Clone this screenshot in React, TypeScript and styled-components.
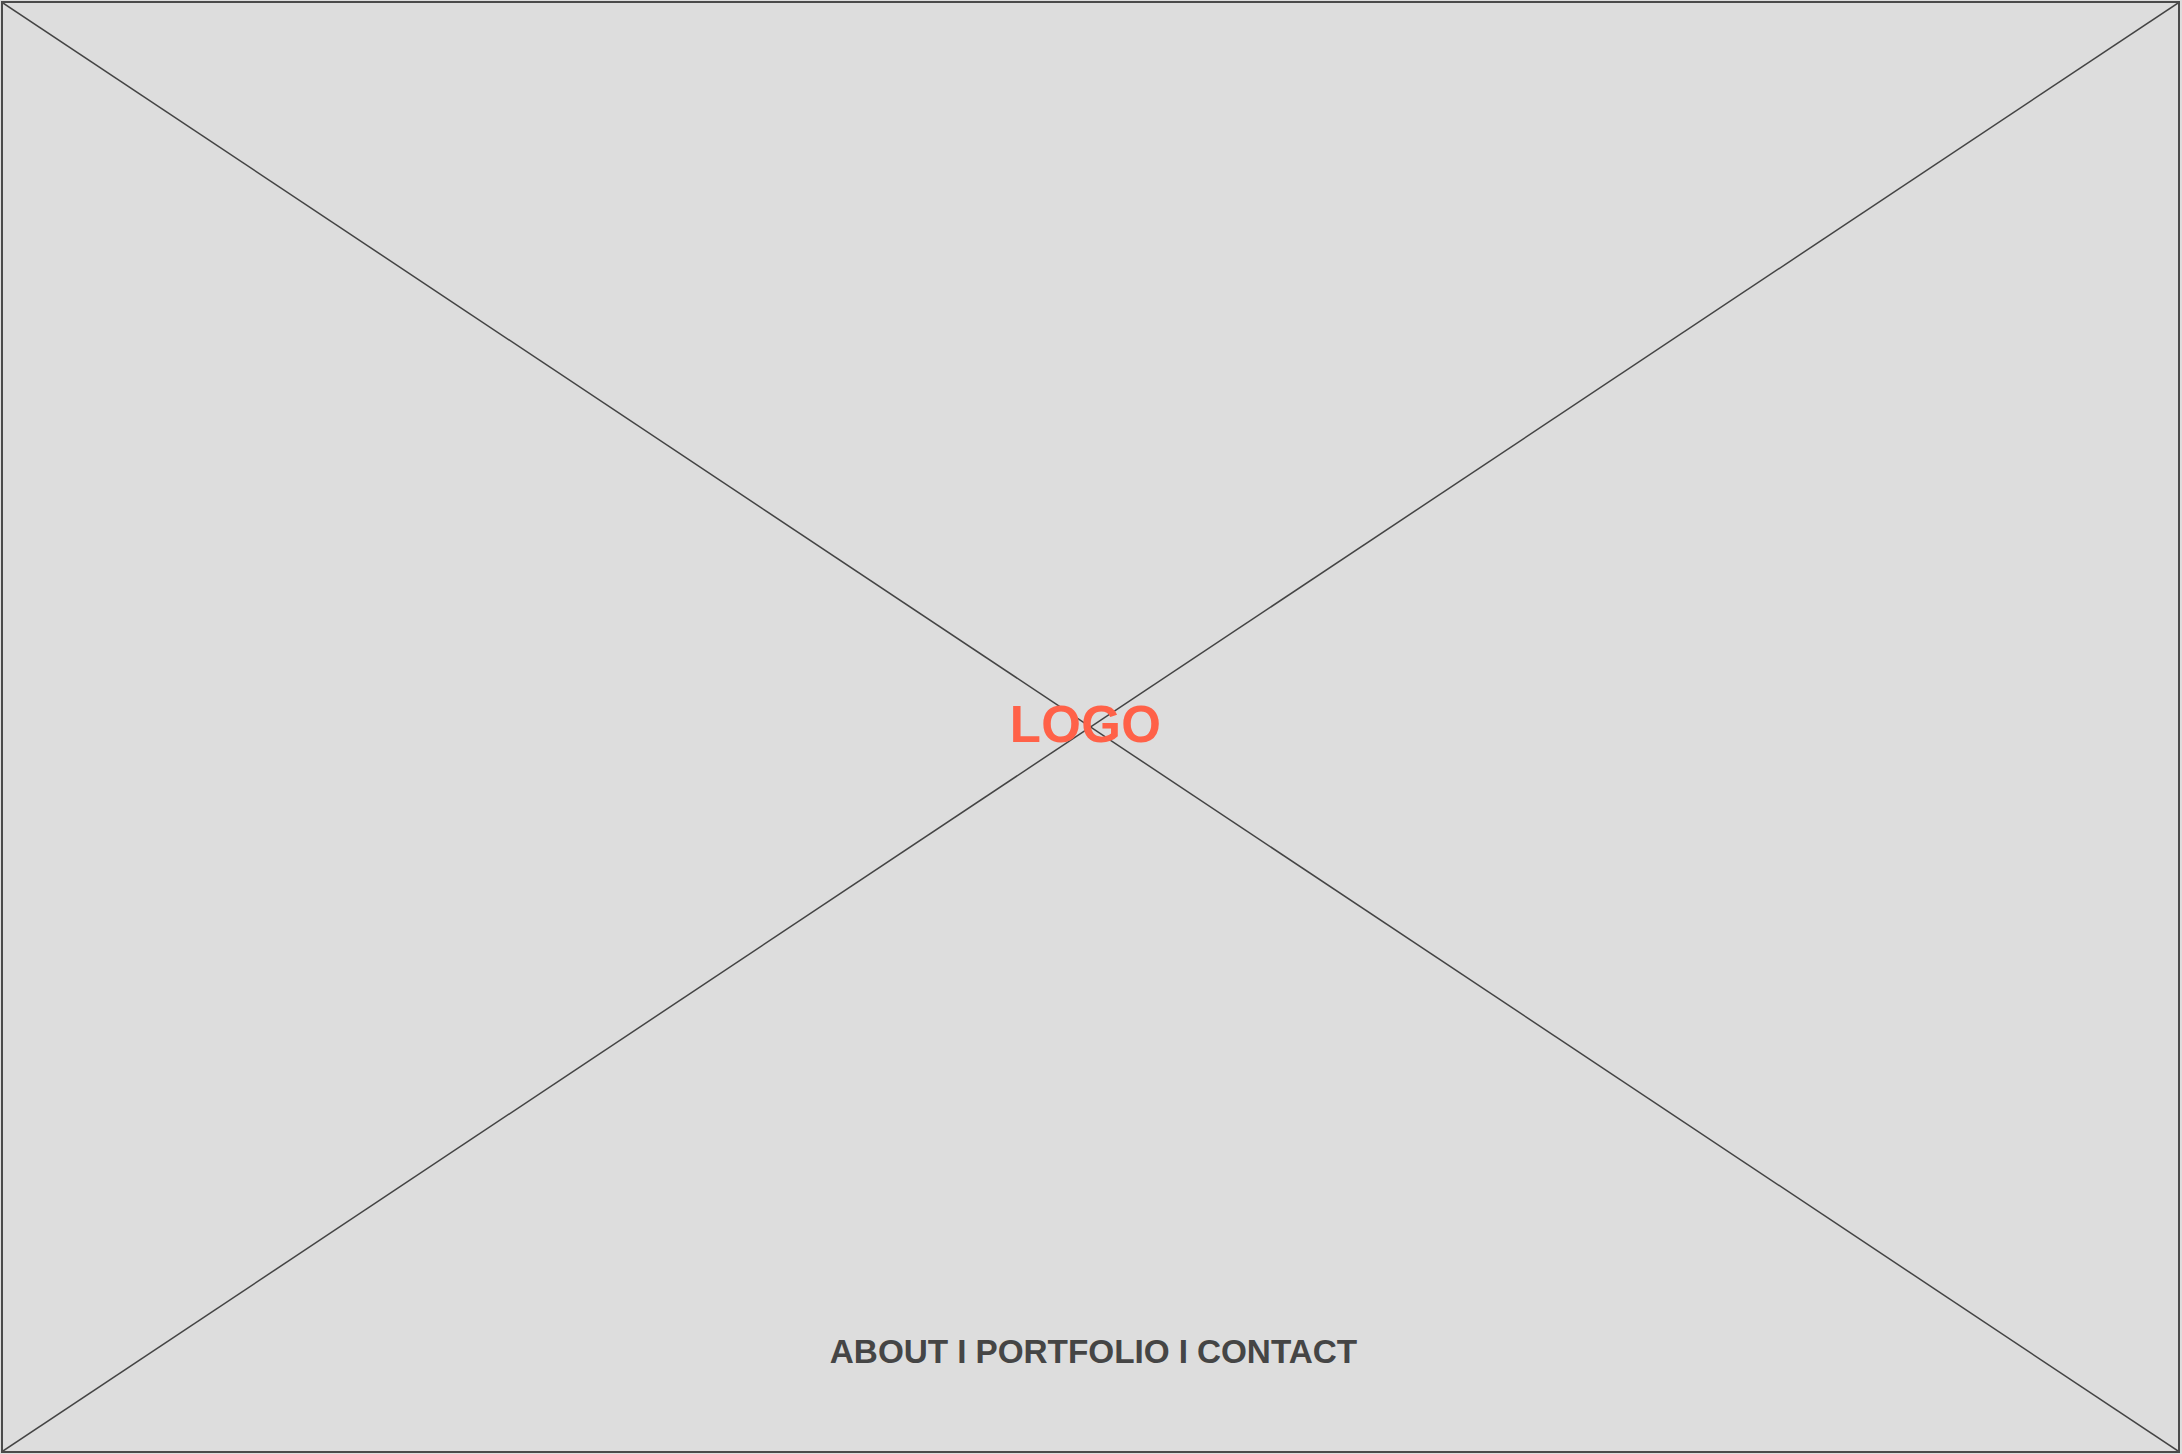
import React from "react";
import styled, { createGlobalStyle } from "styled-components";

const Global = createGlobalStyle`
  html, body {
    margin: 0;
    padding: 0;
    background: #dddddd;
  }
  body {
    font-family: "Liberation Sans", Arial, Helvetica, sans-serif;
  }
`;

const Frame = styled.div`
  position: relative;
  box-sizing: border-box;
  margin: 1px 0 0 1px;
  width: 2179px;
  height: 1452px;
  border: 2px solid #4a4a4a;
  background: #dddddd;
  display: flex;
  flex-direction: column;
  align-items: center;
  padding: 696px 0 83px;
  overflow: hidden;
`;

const Cross = styled.svg`
  position: absolute;
  inset: 0;
  width: 100%;
  height: 100%;
  pointer-events: none;
`;

const Logo = styled.h1`
  position: relative;
  margin: 0 10px 0 0;
  font-family: "Liberation Sans", Arial, Helvetica, sans-serif;
  font-weight: 700;
  font-size: 51px;
  line-height: 1;
  color: #ff6148;
  letter-spacing: 0.3px;
`;

const Nav = styled.nav`
  position: relative;
  margin: auto 0 0 6px;
  display: flex;
  gap: 0.27em;
  font-family: "Liberation Sans", Arial, Helvetica, sans-serif;
  font-weight: 700;
  font-size: 33.3px;
  line-height: 1;
  color: #454545;
`;

const NavItem = styled.a`
  color: inherit;
  text-decoration: none;
`;

const Sep = styled.span`
  color: inherit;
`;

const items = ["ABOUT", "PORTFOLIO", "CONTACT"];

export default function App() {
  return (
    <>
      <Global />
      <Frame>
        <Cross preserveAspectRatio="none" viewBox="0 0 100 100">
          <line x1="0" y1="0" x2="100" y2="100" stroke="#444" strokeWidth="1.5" vectorEffect="non-scaling-stroke" />
          <line x1="100" y1="0" x2="0" y2="100" stroke="#444" strokeWidth="1.5" vectorEffect="non-scaling-stroke" />
        </Cross>
        <Logo>LOGO</Logo>
        <Nav>
          {items.map((it, i) => (
            <React.Fragment key={it}>
              {i > 0 && <Sep>I</Sep>}
              <NavItem href="#">{it}</NavItem>
            </React.Fragment>
          ))}
        </Nav>
      </Frame>
    </>
  );
}
